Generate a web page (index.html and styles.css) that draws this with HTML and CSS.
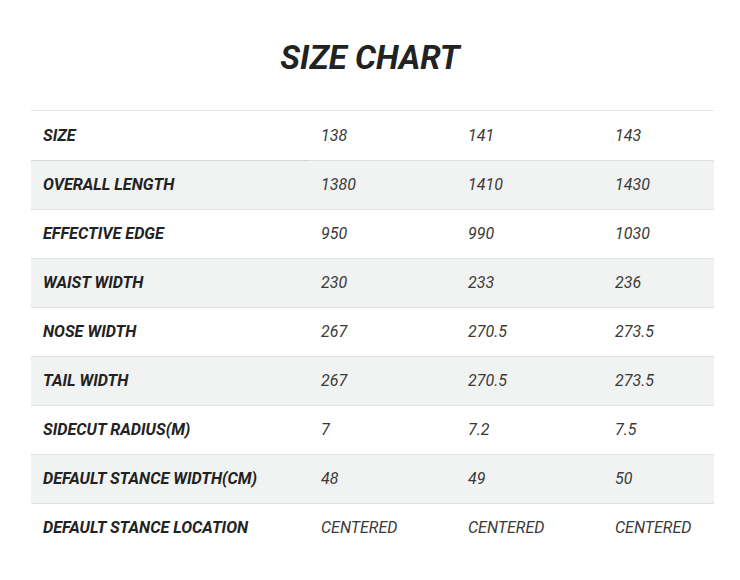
FILE: index.html
```html
<!DOCTYPE html>
<html>
<head>
<meta charset="utf-8">
<link rel="stylesheet" href="styles.css">
</head>
<body>
<div class="page">
  <h1 class="title">SIZE CHART</h1>
  <div class="table-wrap">
  <table class="chart">
    <colgroup>
      <col class="c-label"><col class="c-val"><col class="c-val"><col class="c-last">
    </colgroup>
    <tbody>
      <tr class="first"><th>SIZE</th><td>138</td><td>141</td><td>143</td></tr>
      <tr class="alt"><th>OVERALL LENGTH</th><td>1380</td><td>1410</td><td>1430</td></tr>
      <tr><th>EFFECTIVE EDGE</th><td>950</td><td>990</td><td>1030</td></tr>
      <tr class="alt"><th>WAIST WIDTH</th><td>230</td><td>233</td><td>236</td></tr>
      <tr><th>NOSE WIDTH</th><td>267</td><td>270.5</td><td>273.5</td></tr>
      <tr class="alt"><th>TAIL WIDTH</th><td>267</td><td>270.5</td><td>273.5</td></tr>
      <tr><th>SIDECUT RADIUS(M)</th><td>7</td><td>7.2</td><td>7.5</td></tr>
      <tr class="alt"><th>DEFAULT STANCE WIDTH(CM)</th><td>48</td><td>49</td><td>50</td></tr>
      <tr class="last"><th>DEFAULT STANCE LOCATION</th><td>CENTERED</td><td>CENTERED</td><td>CENTERED</td></tr>
    </tbody>
  </table>
  </div>
</div>
</body>
</html>
```
FILE: styles.css
```css
html, body {
  margin: 0;
  padding: 0;
  background: #ffffff;
}
.page {
  font-family: Roboto, "Liberation Sans", sans-serif;
}
.title {
  margin: 0;
  padding-top: 39px;
  height: 110px;
  box-sizing: border-box;
  text-align: center;
  font-size: 33px;
  line-height: 38px;
  font-weight: 700;
  font-style: italic;
  color: #222222;
}
.table-wrap {
  padding: 0 26px 0 31px;
}
.chart {
  border-collapse: collapse;
  table-layout: fixed;
  width: 683px;
  border-top: 1px solid #e2e6e6;
}
.c-label { width: 278px; }
.c-val { width: 147px; }
.c-last { width: 111px; }
.chart th, .chart td {
  box-sizing: border-box;
  height: 49px;
  padding: 0 12px 1px;
  text-align: left;
  vertical-align: middle;
  font-size: 16px;
  font-style: italic;
  border-bottom: 1px solid #dfe2e2;
  white-space: nowrap;
}
.chart th {
  font-weight: 700;
  color: #222222;
  font-size: 16.2px;
}
.chart td {
  font-weight: 400;
  color: #3a3a3a;
}
.chart tr.first th, .chart tr.first td {
  height: 50px;
}
.chart tr.alt th, .chart tr.alt td {
  background: #f1f2f2;
}
.chart tr.first th {
  border-bottom: 1px solid #d2d6d6;
}
.chart tr.last th, .chart tr.last td {
  border-bottom: none;
}
```
